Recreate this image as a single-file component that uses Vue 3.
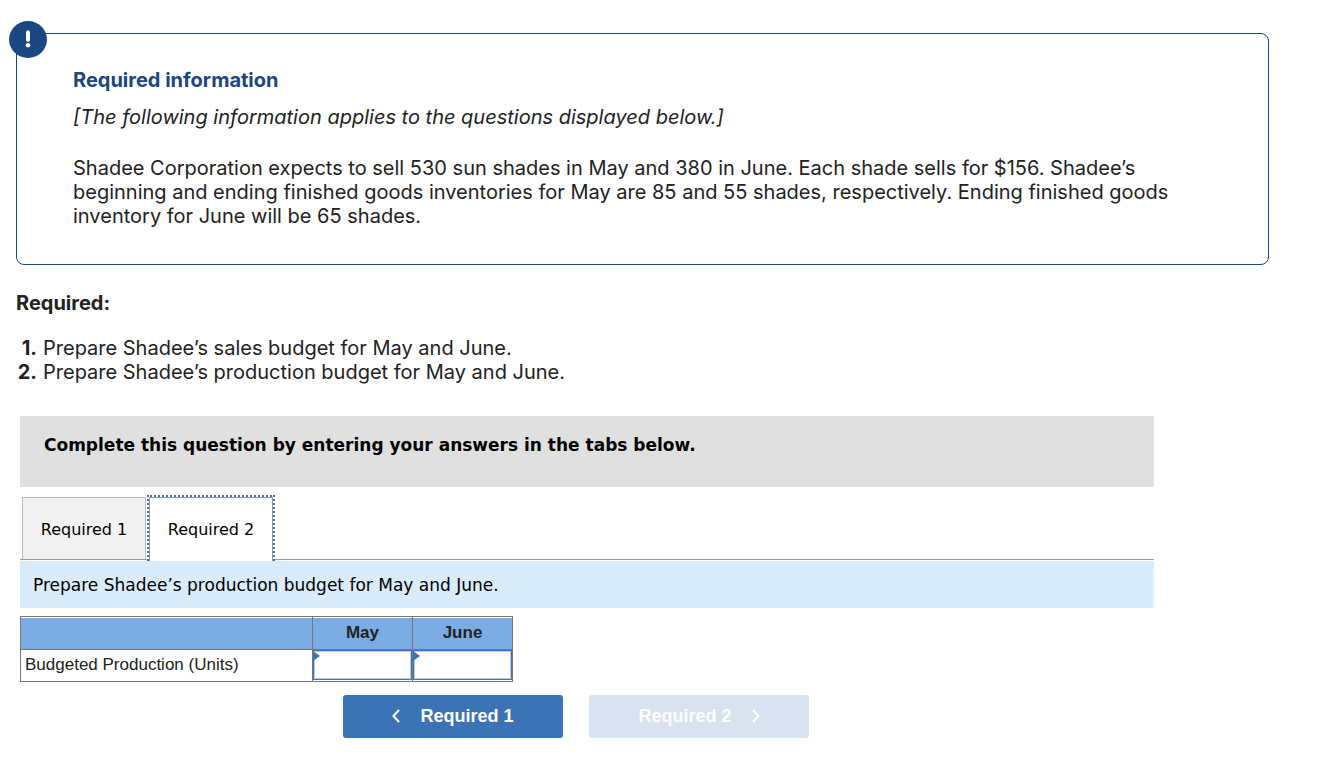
<script setup>
import { ref } from 'vue'

const steps = [
  'Prepare Shadee’s sales budget for May and June.',
  'Prepare Shadee’s production budget for May and June.',
]
const tabs = ['Required 1', 'Required 2']
const active = ref(1)
const months = ['May', 'June']
const units = ref(['', ''])
</script>

<template>
  <main class="page">
    <section class="info">
      <span class="badge">
        <svg width="38" height="37" viewBox="0 0 38 37" role="img" aria-label="Important">
          <ellipse cx="19" cy="18.500" rx="19" ry="18.500" fill="#1a4780" />
          <path d="M19 11.300v7.400" stroke="#fff" stroke-width="4" stroke-linecap="round" />
          <circle cx="19" cy="24.300" r="2.300" fill="#fff" />
        </svg>
      </span>
      <h1>Required information</h1>
      <p class="note">[The following information applies to the questions displayed below.]</p>
      <p class="facts">
        Shadee Corporation expects to sell 530 sun shades in May and 380 in June. Each shade sells for $156. Shadee’s<br />
        beginning and ending finished goods inventories for May are 85 and 55 shades, respectively. Ending finished goods<br />
        inventory for June will be 65 shades.
      </p>
    </section>

    <section class="required">
      <h2>Required:</h2>
      <ol>
        <li v-for="(step, i) in steps" :key="step"><b>{{ i + 1 }}.</b><span>{{ step }}</span></li>
      </ol>
    </section>

    <section class="work">
      <div class="banner">Complete this question by entering your answers in the tabs below.</div>
      <div class="tabs" role="tablist">
        <button
          v-for="(tab, i) in tabs"
          :key="tab"
          type="button"
          role="tab"
          class="tab"
          :class="{ active: i === active }"
          :aria-selected="i === active"
          @click="active = i"
        >{{ tab }}</button>
      </div>
      <div class="prompt">Prepare Shadee’s production budget for May and June.</div>

      <table>
        <thead>
          <tr>
            <th class="label"></th>
            <th v-for="month in months" :id="month" :key="month" scope="col">{{ month }}</th>
          </tr>
        </thead>
        <tbody>
          <tr>
            <th id="units" class="label" scope="row">Budgeted Production (Units)</th>
            <td v-for="(month, i) in months" :key="month">
              <div class="cell">
                <input v-model="units[i]" type="text" :aria-labelledby="'units ' + month" />
                <svg class="marker" width="7" height="10" viewBox="0 0 7 10" aria-hidden="true">
                  <path d="M0 0L7 5L0 10Z" fill="#3b73b6" />
                </svg>
              </div>
            </td>
          </tr>
        </tbody>
      </table>

      <nav class="pager">
        <button type="button" class="step" @click="active = 0">
          <svg width="8" height="14" viewBox="0 0 8 14" aria-hidden="true">
            <path d="M7 1L1.500 7L7 13" fill="none" stroke="#fff" stroke-width="2" />
          </svg>
          <span>Required 1</span>
        </button>
        <button type="button" class="step" disabled>
          <span>Required 2</span>
          <svg width="8" height="14" viewBox="0 0 8 14" aria-hidden="true">
            <path d="M1 1L6.500 7L1 13" fill="none" stroke="#fff" stroke-width="2" />
          </svg>
        </button>
      </nav>
    </section>
  </main>
</template>

<style>
body {
  margin: 0;
  background: #fff;
}
</style>

<style scoped>
.page {
  padding: 33px 57px 38px 16px;
  color: #222;
  font-family: Inter, "Open Sans", sans-serif;
  font-size: 20px;
  line-height: 24px;
}
.info {
  position: relative;
  padding: 34px 56px 36px;
  border: 1px solid #1a4780;
  border-radius: 8px;
}
.badge {
  position: absolute;
  top: -13px;
  left: -8px;
}
.badge svg {
  display: block;
}
h1,
h2,
p,
ol {
  margin: 0;
  padding: 0;
}
h1,
h2 {
  font-size: 20px;
  line-height: 24px;
  font-weight: bold;
}
h1 {
  color: #1a4780;
}
.note {
  margin-top: 13px;
  font-style: italic;
}
.facts {
  margin-top: 27px;
}
.required {
  margin-top: 26px;
}
ol {
  margin-top: 21px;
  list-style: none;
}
li {
  display: flex;
  gap: 6px;
}
li b {
  width: 21px;
  text-align: right;
}
.work {
  margin: 32px 115px 0 4px;
  color: #000;
  font-family: Verdana, "DejaVu Sans", sans-serif;
}
.banner {
  padding: 17px 24px 30px;
  background: #e0e0e0;
  font-size: 17px;
  font-weight: bold;
}
.tabs {
  display: flex;
  gap: 3px;
  margin-top: 10px;
  padding-left: 2px;
  border-bottom: 1px solid #999;
}
.tab {
  width: 124px;
  height: 62px;
  padding: 2px 0 0;
  border: 1px solid #bbb;
  border-bottom: 0;
  background: #f2f2f2;
  color: #000;
  font-family: inherit;
  font-size: 16px;
}
.tab.active {
  position: relative;
  height: 64px;
  margin-bottom: -2px;
  padding: 0;
  border-color: #999;
  background: #fff;
}
.tab.active::before {
  content: "";
  position: absolute;
  inset: -3px -3px 0;
  border: 2px dotted #3b73b6;
  border-bottom: 0;
}
.prompt {
  margin-top: 1px;
  padding: 12px 13px 11px;
  background: #daebfa;
  font-size: 17px;
}
table {
  margin-top: 8px;
  border-collapse: collapse;
  table-layout: fixed;
  width: 493px;
  color: #222;
  font-family: Arial, "Liberation Sans", sans-serif;
  font-size: 17px;
  line-height: 20px;
}
th,
td {
  box-sizing: border-box;
  padding: 0;
  border: 1px solid #777;
}
th {
  width: 100px;
}
.label {
  width: 292px;
}
thead th {
  height: 33px;
  background: #7aace3;
  box-shadow: inset 0 1px #fff;
}
tbody th {
  padding: 0 4px 2px;
  text-align: left;
  font-weight: normal;
}
td {
  height: 32px;
  vertical-align: top;
}
.cell {
  position: relative;
}
input {
  display: block;
  box-sizing: border-box;
  width: 100%;
  height: 30px;
  padding: 0 8px;
  border: 1px solid #3b73b6;
  outline: 0;
  box-shadow: inset 0 0 0 1px #b9cfe9;
  font: inherit;
  text-align: right;
}
.marker {
  position: absolute;
  top: 1px;
  left: 0;
}
.pager {
  display: flex;
  justify-content: center;
  gap: 26px;
  margin-top: 13px;
  padding-right: 22px;
}
.step {
  display: flex;
  align-items: center;
  justify-content: center;
  gap: 20px;
  width: 220px;
  height: 43px;
  padding: 0 0 1px;
  border: 0;
  border-radius: 3px;
  background: #3b73b6;
  color: #fff;
  font-family: Arial, "Liberation Sans", sans-serif;
  font-size: 18px;
  font-weight: bold;
}
.step:disabled {
  background: #d8e3f0;
}
</style>
